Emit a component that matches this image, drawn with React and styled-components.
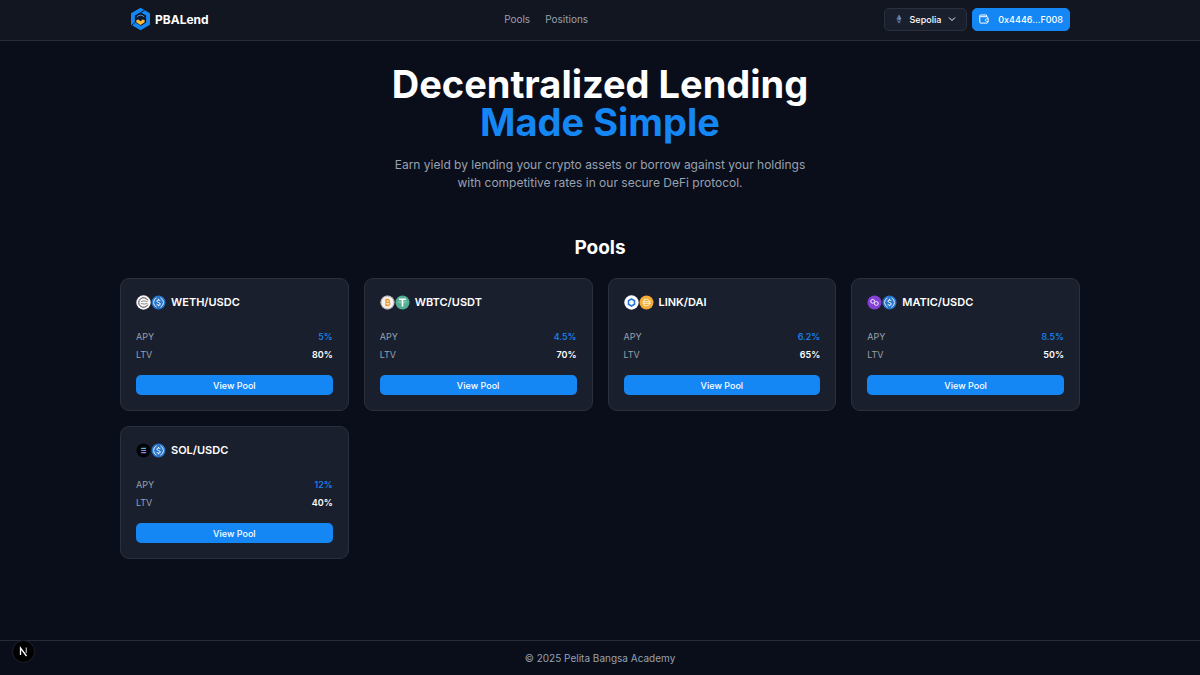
import styled, { createGlobalStyle } from 'styled-components';

const GlobalStyle = createGlobalStyle`
  * {
    box-sizing: border-box;
  }
  body {
    margin: 0;
    background: #0a0e1a;
    color: #fff;
    font-family: Inter, 'Liberation Sans', sans-serif;
    font-size: 9px;
  }
  h1, h2, h3, p, dl, dt, dd {
    margin: 0;
  }
  a {
    color: inherit;
    text-decoration: none;
  }
  button {
    font: inherit;
    cursor: pointer;
  }
`;

const Page = styled.div`
  min-height: 100vh;
  display: flex;
  flex-direction: column;
`;

const Header = styled.header`
  background: #111621;
  border-bottom: 1px solid #252b37;
`;

const HeaderInner = styled.div`
  max-width: 960px;
  margin: 0 auto;
  padding: 7px 10px 9px;
  display: flex;
  justify-content: space-between;
  align-items: center;
`;

const Brand = styled.a`
  display: flex;
  align-items: center;
  gap: 4px;
  font-size: 12px;
  font-weight: 700;
`;

const Nav = styled.nav`
  display: flex;
  gap: 15px;
  font-size: 10px;
  color: #98a1b0;
`;

const Actions = styled.div`
  display: flex;
  gap: 5px;
`;

const HeaderButton = styled.button`
  height: 23px;
  display: flex;
  align-items: center;
  gap: ${({ $primary }) => ($primary ? 9 : 7)}px;
  padding: 0 ${({ $primary }) => ($primary ? 6 : 10)}px;
  border: 1px solid ${({ $primary }) => ($primary ? '#1587f5' : '#2a303e')};
  border-radius: 5px;
  background: ${({ $primary }) => ($primary ? '#1587f5' : '#1a1f2e')};
  color: #fff;
  font-size: 9px;
  font-weight: 500;
`;

const Main = styled.main`
  flex: 1;
  width: 100%;
  max-width: 960px;
  margin: 0 auto;
`;

const Hero = styled.section`
  padding-top: 24px;
  text-align: center;
`;

const Title = styled.h1`
  font-size: 38px;
  line-height: 38px;
  font-weight: 700;
  span {
    display: block;
    color: #1587f5;
  }
`;

const Lead = styled.p`
  max-width: 420px;
  margin: 15px auto 0;
  font-size: 12px;
  line-height: 18px;
  color: #98a1b0;
`;

const SectionTitle = styled.h2`
  margin-top: 44px;
  font-size: 19px;
  line-height: 24px;
  font-weight: 700;
  text-align: center;
`;

const PoolGrid = styled.section`
  display: grid;
  grid-template-columns: repeat(4, 1fr);
  gap: 15px;
  margin-top: 18px;
`;

const Card = styled.article`
  padding: 15px;
  border: 1px solid #2a303e;
  border-radius: 9px;
  background: #1a1f2e;
`;

const CardHead = styled.div`
  display: flex;
  align-items: center;
  gap: 5px;
  height: 16px;
`;

const TokenPair = styled.div`
  display: flex;
  svg {
    display: block;
  }
`;

const CardTitle = styled.h3`
  font-size: 11px;
  line-height: 16px;
  font-weight: 600;
`;

const Stats = styled.dl`
  margin: 18px 0 11px;
`;

const Stat = styled.div`
  display: flex;
  justify-content: space-between;
  line-height: 18px;
  dt {
    color: #98a1b0;
  }
  dd {
    color: ${({ $accent }) => ($accent ? '#1587f5' : '#fff')};
    font-weight: ${({ $accent }) => ($accent ? 500 : 600)};
  }
`;

const ViewButton = styled.button`
  display: block;
  width: 100%;
  height: 20px;
  padding: 0;
  border: 0;
  border-radius: 5px;
  background: #1587f5;
  color: #fff;
  font-size: 9px;
  font-weight: 500;
`;

const Footer = styled.footer`
  padding: 8px 0;
  border-top: 1px solid #252b37;
  font-size: 10px;
  line-height: 18px;
  text-align: center;
  color: #98a1b0;
`;

const DevBadge = styled.button`
  position: fixed;
  left: 12px;
  bottom: 12px;
  width: 23px;
  height: 23px;
  padding: 0;
  border: 1px solid #20222a;
  border-radius: 50%;
  background: #000;
  svg {
    display: block;
    margin: 0 auto;
  }
`;

const Logo = () => (
  <svg width="21" height="24" viewBox="0 0 21 24" aria-hidden="true">
    <path d="M10.500 .8L20 6.300v11.400l-9.500 5.500L1 17.700V6.300z" fill="#1587f5" />
    <path d="M10.500 5.300l5.600 3.200v6.700l-5.600 3.300-5.600-3.300V8.500z" fill="#111a2b" />
    <path d="M11 5.500L14.800 2.800M4.800 15.500L1 19M16 15l-5.500 3.800" fill="none" stroke="#111a2b" strokeWidth="1" />
    <path d="M6.800 9.800q3.700-3.200 7.400 0" fill="none" stroke="#4ba3f5" strokeWidth=".9" />
    <path d="M6.300 13.300l2-.7 2.200 1.600 2.200-1.600 2 .7v2l-4.200 2.600-4.200-2.600z" fill="#fdbb37" />
  </svg>
);

const EthMark = () => (
  <svg width="8" height="10" viewBox="0 0 8 10" aria-hidden="true">
    <path d="M4 .5L6.500 5 4 6.500 1.500 5z" fill="#718db3" />
    <path d="M4 .5V6.500L1.500 5z" fill="#4d6b93" />
    <path d="M1.500 6L4 7.400 6.500 6 4 9.500z" fill="#5f7fa9" />
  </svg>
);

const Chevron = () => (
  <svg width="8" height="8" viewBox="0 0 8 8" fill="none" stroke="#fff" strokeLinecap="round" strokeLinejoin="round" aria-hidden="true">
    <path d="M1.300 2.800L4 5.500l2.700-2.700" />
  </svg>
);

const WalletMark = () => (
  <svg width="10" height="10" viewBox="0 0 10 10" fill="none" stroke="#fff" strokeLinecap="round" strokeLinejoin="round" aria-hidden="true">
    <path d="M7.500 2.500V1H1.600a.9.900 0 0 0 0 1.700H8a.7.700 0 0 1 .7.700v1.500M.8 2v6.200a.9.900 0 0 0 .9.900H8a.7.700 0 0 0 .7-.7V7.300" />
    <path d="M9.400 4.900H7.500a1.200 1.200 0 0 0 0 2.400h1.900z" strokeWidth=".8" />
  </svg>
);

const NextMark = () => (
  <svg width="11" height="11" viewBox="0 0 11 11" fill="none" strokeWidth="1.300" aria-hidden="true">
    <path d="M2.500 9V2l6 8" stroke="#fff" />
    <path d="M8.300 1.600V7" stroke="#a5a5a5" />
  </svg>
);

const tokenMarks = {
  WETH: (
    <>
      <circle cx="7.500" cy="7.500" r="7.200" fill="#f7f7f7" />
      <path d="M11.800 5.300A4.800 4.800 0 1 0 11.800 9.700" fill="none" stroke="#4b4544" strokeWidth="1" />
      <path d="M5 6.500q3-1.200 6.500 0M5 8.500q3 1.200 6.500 0" fill="none" stroke="#77716f" strokeWidth=".8" />
    </>
  ),
  USDC: (
    <>
      <circle cx="7.500" cy="7.500" r="7" fill="#2775ca" />
      <path d="M5.600 2.900a5 5 0 0 0 0 9.200M9.400 2.900a5 5 0 0 1 0 9.200" fill="none" stroke="#e3effc" />
      <path d="M9.300 6.100C9.100 4.700 5.900 4.600 5.900 6.200S9.300 7.300 9.300 9 6 10.400 5.700 8.900M7.500 3.900v1.200M7.500 10v1.200" fill="none" stroke="#fff" />
    </>
  ),
  WBTC: (
    <>
      <circle cx="7.500" cy="7.500" r="7" fill="#f5f1ee" />
      <circle cx="7.500" cy="7.500" r="6.500" fill="none" stroke="#746b78" strokeWidth=".5" />
      <path d="M6 4.800h2.200a1.300 1.300 0 0 1 0 2.600H6zM6 7.400h2.500a1.400 1.400 0 0 1 0 2.800H6zM6.800 3.700v1M8.200 3.700v1M6.800 10.200v1M8.200 10.200v1M5 4.800h1M5 10.200h1" fill="none" stroke="#f0962a" strokeWidth="1.200" />
    </>
  ),
  USDT: (
    <>
      <circle cx="7.500" cy="7.500" r="7" fill="#53ae94" />
      <path d="M4 4.200h7M7.500 4v7.500" stroke="#fff" strokeWidth="1.600" />
      <ellipse cx="7.500" cy="7" rx="4" ry=".9" fill="none" stroke="#fff" strokeWidth=".3" />
    </>
  ),
  LINK: (
    <>
      <circle cx="7.500" cy="7.500" r="7.200" fill="#fff" />
      <path d="M7.500 4l3 1.750v3.500l-3 1.750-3-1.750v-3.500z" fill="none" stroke="#2876d9" strokeWidth="1.600" />
    </>
  ),
  DAI: (
    <>
      <circle cx="7.500" cy="7.500" r="7" fill="#f5ac37" />
      <path d="M5 4.300h2.500a3.200 3.200 0 0 1 0 6.400H5zM3.500 6.700h8.200M3.500 8.300h8.200" fill="none" stroke="#fff0d5" strokeWidth=".9" />
    </>
  ),
  MATIC: (
    <>
      <circle cx="7.500" cy="7.500" r="7" fill="#8440d5" />
      <path d="M7.500 6.500V5.300L5.700 4.300 3.900 5.300v2.100l1.800 1 3.600-2 1.800 1v2.100l-1.800 1-1.800-1V8.300" fill="none" stroke="#fff" strokeWidth=".9" />
    </>
  ),
  SOL: (
    <>
      <circle cx="7.500" cy="7.500" r="7" fill="#020309" />
      <path d="M5.600 4.700h5l-1 1.200h-5z" fill="#5fb9c4" />
      <path d="M4.600 6.900h5l1 1.200h-5z" fill="#7c91d6" />
      <path d="M5.600 9.100h5l-1 1.200h-5z" fill="#a184dc" />
    </>
  ),
};

const Token = ({ name }) => (
  <svg width="15" height="15" viewBox="0 0 15 15" role="img" aria-label={name}>
    {tokenMarks[name]}
  </svg>
);

const pools = [
  { base: 'WETH', quote: 'USDC', apy: '5%', ltv: '80%' },
  { base: 'WBTC', quote: 'USDT', apy: '4.5%', ltv: '70%' },
  { base: 'LINK', quote: 'DAI', apy: '6.2%', ltv: '65%' },
  { base: 'MATIC', quote: 'USDC', apy: '8.5%', ltv: '50%' },
  { base: 'SOL', quote: 'USDC', apy: '12%', ltv: '40%' },
];

const PoolCard = ({ base, quote, apy, ltv }) => (
  <Card>
    <CardHead>
      <TokenPair>
        <Token name={base} />
        <Token name={quote} />
      </TokenPair>
      <CardTitle>{`${base}/${quote}`}</CardTitle>
    </CardHead>
    <Stats>
      <Stat $accent>
        <dt>APY</dt>
        <dd>{apy}</dd>
      </Stat>
      <Stat>
        <dt>LTV</dt>
        <dd>{ltv}</dd>
      </Stat>
    </Stats>
    <ViewButton type="button">View Pool</ViewButton>
  </Card>
);

const App = () => (
  <Page>
    <GlobalStyle />
    <Header>
      <HeaderInner>
        <Brand href="#">
          <Logo />
          PBALend
        </Brand>
        <Nav>
          <a href="#pools">Pools</a>
          <a href="#positions">Positions</a>
        </Nav>
        <Actions>
          <HeaderButton type="button">
            <EthMark />
            Sepolia
            <Chevron />
          </HeaderButton>
          <HeaderButton type="button" $primary>
            <WalletMark />
            0x4446...F008
          </HeaderButton>
        </Actions>
      </HeaderInner>
    </Header>
    <Main>
      <Hero>
        <Title>
          Decentralized Lending
          <span>Made Simple</span>
        </Title>
        <Lead>
          Earn yield by lending your crypto assets or borrow against your holdings with competitive rates in our secure
          DeFi protocol.
        </Lead>
      </Hero>
      <SectionTitle id="pools">Pools</SectionTitle>
      <PoolGrid>
        {pools.map((pool) => (
          <PoolCard key={pool.base} {...pool} />
        ))}
      </PoolGrid>
    </Main>
    <Footer>© 2025 Pelita Bangsa Academy</Footer>
    <DevBadge type="button" aria-label="Open dev tools">
      <NextMark />
    </DevBadge>
  </Page>
);

export default App;
